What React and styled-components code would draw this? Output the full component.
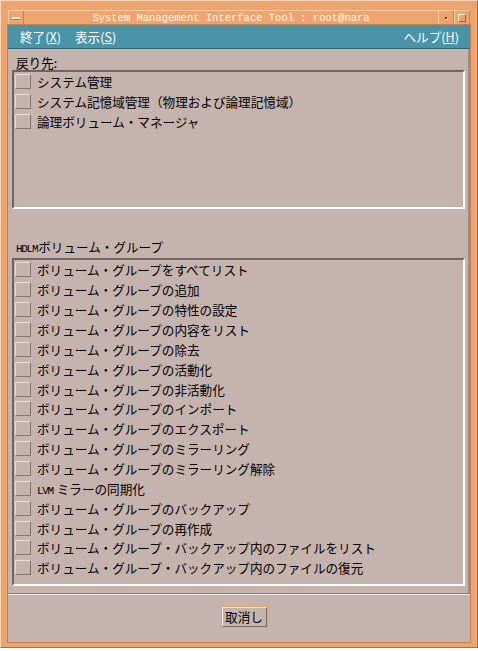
import styled, { createGlobalStyle } from "styled-components";

const GlobalStyle = createGlobalStyle`
    html, body {
        margin: 0;
        padding: 0;
        background: #ffffff;
    }
`

const JP = `"Noto Sans CJK JP", "Noto Sans", sans-serif`

const returnItems = [
    { text: "システム管理" },
    { text: "システム記憶域管理（物理および論理記憶域）" },
    { text: "論理ボリューム・マネージャ" },
]

const lvmItems = [
    { text: "ボリューム・グループをすべてリスト" },
    { text: "ボリューム・グループの追加" },
    { text: "ボリューム・グループの特性の設定" },
    { text: "ボリューム・グループの内容をリスト" },
    { text: "ボリューム・グループの除去" },
    { text: "ボリューム・グループの活動化" },
    { text: "ボリューム・グループの非活動化" },
    { text: "ボリューム・グループのインポート" },
    { text: "ボリューム・グループのエクスポート" },
    { text: "ボリューム・グループのミラーリング" },
    { text: "ボリューム・グループのミラーリング解除" },
    { latin: "LVM", text: " ミラーの同期化" },
    { text: "ボリューム・グループのバックアップ" },
    { text: "ボリューム・グループの再作成" },
    { text: "ボリューム・グループ・バックアップ内のファイルをリスト" },
    { text: "ボリューム・グループ・バックアップ内のファイルの復元" },
]

function Item({ item }) {
    return (
        <Row>
            <Check />
            <span>
                {item.latin && <Latin>{item.latin}</Latin>}
                {item.text}
            </span>
        </Row>
    )
}

function MenuEntry({ label, mnemonic, right }) {
    return (
        <MenuItem $right={right}>
            {label}(<u>{mnemonic}</u>)
        </MenuItem>
    )
}

export default function App() {
    return (
        <>
            <GlobalStyle />
            <Window>
                <TitleBar>
                    <FrameButton>
                        <Dash />
                    </FrameButton>
                    <Title>System Management Interface Tool : root@nara</Title>
                    <FrameButton>
                        <Dot />
                    </FrameButton>
                    <FrameButton>
                        <Square />
                    </FrameButton>
                </TitleBar>

                <Client>
                    <MenuBar>
                        <MenuEntry label="終了" mnemonic="X" />
                        <MenuEntry label="表示" mnemonic="S" />
                        <MenuEntry label="ヘルプ" mnemonic="H" right />
                    </MenuBar>

                    <Upper>
                        <Label>戻り先:</Label>
                        <List $height={139}>
                            {returnItems.map((it, i) => <Item key={i} item={it} />)}
                        </List>

                        <Label $gap={31}>
                            <Latin>HDLM</Latin>ボリューム・グループ
                        </Label>
                        <List $height={328}>
                            {lvmItems.map((it, i) => <Item key={i} item={it} />)}
                        </List>
                    </Upper>

                    <Lower>
                        <Button>取消し</Button>
                    </Lower>
                </Client>
            </Window>
        </>
    )
}

const Window = styled.div`
    position: relative;
    width: 478px;
    height: 648px;
    box-sizing: border-box;
    padding: 9px 7px 5px 7px;
    background: #eea56d;
    border-top: 1px solid #fcd9bb;
    border-left: 1px solid #fcd9bb;
    border-right: 1px solid #b06f3f;
    border-bottom: 1px solid #b06f3f;
    display: flex;
    flex-direction: column;
`

const TitleBar = styled.div`
    height: 15px;
    display: flex;
    align-items: stretch;
    box-sizing: border-box;
    border-top: 1px solid #f8c9a0;
`

const FrameButton = styled.div`
    width: 16px;
    box-sizing: border-box;
    display: flex;
    align-items: center;
    justify-content: center;
    border-left: 1px solid #f9cda6;
    border-right: 1px solid #c98450;
`

const Dash = styled.div`
    width: 8px;
    height: 2px;
    background: #fff3e6;
    border-bottom: 1px solid #b87440;
`

const Dot = styled.div`
    width: 2px;
    height: 2px;
    background: #7a4a2a;
    box-shadow: 1px 1px 0 #fde0c6;
`

const Square = styled.div`
    width: 8px;
    height: 8px;
    box-sizing: border-box;
    border-top: 1px solid #fff1e2;
    border-left: 1px solid #fff1e2;
    border-right: 1px solid #9c5e32;
    border-bottom: 1px solid #9c5e32;
`

const Title = styled.div`
    flex: 1;
    text-align: center;
    font-family: "Liberation Mono", "DejaVu Sans Mono", monospace;
    font-size: 10.5px;
    line-height: 14px;
    color: #fff6ec;
    white-space: nowrap;
`

const Client = styled.div`
    flex: 1;
    display: flex;
    flex-direction: column;
    background: #c5b3ad;
    box-shadow: 0 0 0 1px #c27f4c;
`

const MenuBar = styled.div`
    height: 24px;
    box-sizing: border-box;
    display: flex;
    align-items: center;
    gap: 14px;
    padding: 0 11px 0 12px;
    background: #4a94a8;
    border-bottom: 1px solid #2f6677;
`

const MenuItem = styled.div`
    margin-left: ${props => props.$right ? "auto" : "0"};
    font-family: ${JP};
    font-size: 12.6px;
    line-height: 16px;
    color: #ffffff;

    u {
        text-decoration: underline;
        text-underline-offset: 1px;
    }
`

const Upper = styled.div`
    height: 545px;
    box-sizing: border-box;
    padding: 7px 3px 0 4px;
    display: flex;
    flex-direction: column;
    border-right: 2px solid #9b8b87;
    border-bottom: 1px solid #8a7a76;
`

const Label = styled.div`
    height: 14px;
    flex-shrink: 0;
    margin-top: ${props => props.$gap || 0}px;
    margin-bottom: ${props => props.$gap ? 4 : 0}px;
    padding-left: 4px;
    font-family: ${JP};
    font-size: 12.6px;
    line-height: 14px;
    color: #000000;
    white-space: nowrap;
`

const Latin = styled.span`
    font-family: "Liberation Mono", "DejaVu Sans Mono", monospace;
    font-size: 11px;
    line-height: 1;
    letter-spacing: -1.3px;
    margin-right: 1px;
`

const List = styled.div`
    height: ${props => props.$height}px;
    flex-shrink: 0;
    box-sizing: border-box;
    padding: 0 0 0 1px;
    border-top: 2px solid #6f6461;
    border-left: 2px solid #6f6461;
    border-right: 2px solid #ffffff;
    border-bottom: 2px solid #ffffff;
    display: flex;
    flex-direction: column;
`

const Row = styled.div`
    height: 19.87px;
    flex-shrink: 0;
    display: flex;
    align-items: center;
    gap: 6px;
    font-family: ${JP};
    font-size: 12.6px;
    color: #000000;
    white-space: nowrap;
`

const Check = styled.div`
    width: 16px;
    height: 15px;
    flex-shrink: 0;
    box-sizing: border-box;
    border-top: 1px solid #e6dcd8;
    border-left: 1px solid #e6dcd8;
    border-right: 1px solid #857570;
    border-bottom: 1px solid #857570;
`

const Lower = styled.div`
    flex: 1;
    box-sizing: border-box;
    border-top: 1px solid #f4eeec;
    display: flex;
    justify-content: center;
    padding: 12px 0 0 10px;
`

const Button = styled.button`
    width: 45px;
    height: 20px;
    padding: 0;
    box-sizing: border-box;
    background: #c5b3ad;
    border-top: 1px solid #f2ebe8;
    border-left: 1px solid #f2ebe8;
    border-right: 1px solid #7c6c68;
    border-bottom: 1px solid #7c6c68;
    outline: 1px solid #f0a060;
    font-family: ${JP};
    font-size: 12.6px;
    line-height: 16px;
    color: #000000;
`
